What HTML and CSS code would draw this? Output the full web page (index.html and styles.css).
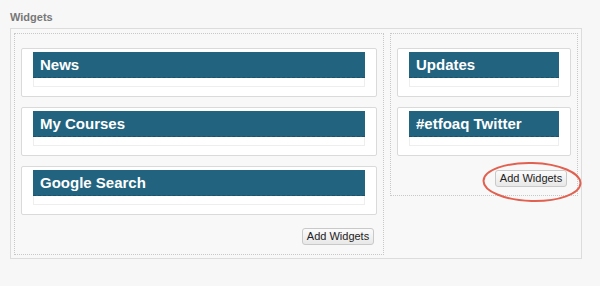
FILE: index.html
```html
<!DOCTYPE html>
<html lang="en">
<head>
    <meta charset="UTF-8">
    <title>Widgets</title>
    <link rel="stylesheet" href="styles.css">
</head>
<body>
    <div class="page">
        <h3 class="section-title">Widgets</h3>
        <div class="widgets-box">
            <!-- Main column -->
            <div class="column column-main">
                <div class="widget">
                    <div class="widget-title">News</div>
                    <div class="widget-body"></div>
                </div>
                <div class="widget">
                    <div class="widget-title">My Courses</div>
                    <div class="widget-body"></div>
                </div>
                <div class="widget">
                    <div class="widget-title">Google Search</div>
                    <div class="widget-body"></div>
                </div>
                <div class="column-actions">
                    <button class="add-btn">Add Widgets</button>
                </div>
            </div>

            <!-- Side column -->
            <div class="column column-side">
                <div class="widget">
                    <div class="widget-title">Updates</div>
                    <div class="widget-body"></div>
                </div>
                <div class="widget">
                    <div class="widget-title">#etfoaq Twitter</div>
                    <div class="widget-body"></div>
                </div>
                <div class="column-actions">
                    <span class="highlight-wrap">
                        <button class="add-btn">Add Widgets</button>
                        <svg class="highlight" width="104" height="46" viewBox="0 0 104 46">
                            <ellipse cx="52" cy="23" rx="48.5" ry="19" fill="none" stroke="#e2604f" stroke-width="2" transform="rotate(1.5 52 23)"/>
                        </svg>
                    </span>
                </div>
            </div>
        </div>
    </div>
</body>
</html>
```

FILE: styles.css
```css
/* Global Styles */
* {
    margin: 0;
    padding: 0;
    box-sizing: border-box;
}

body {
    background-color: #f7f7f7;
    font-family: "Liberation Sans", Arial, sans-serif;
    color: #333;
}

.page {
    padding: 10px 18px 0 10px;
}

.section-title {
    font-size: 11px;
    font-weight: bold;
    line-height: 15px;
    color: #777;
    margin-bottom: 3px;
}

/* Outer box */
.widgets-box {
    display: flex;
    align-items: flex-start;
    gap: 6px;
    border: 1px solid #dcdcdc;
    padding: 4px 3px 3px 3px;
    background: #f8f8f8;
}

.column {
    border: 1px dotted #c8c8c8;
    padding: 14px 6px 8px 6px;
    display: flex;
    flex-direction: column;
    gap: 10px;
}

.column-main {
    width: 370px;
    padding-bottom: 9px;
}

.column-side {
    flex: 1;
}

/* Widget cards */
.widget {
    background: #fff;
    border: 1px solid #dadada;
    border-radius: 2px;
    padding: 3px 11px 9px 11px;
}

.widget-title {
    background: #226480;
    color: #fff;
    font-size: 15px;
    font-weight: bold;
    line-height: 26px;
    height: 26px;
    padding-left: 7px;
    border-bottom: 1px dashed #1b5269;
}

.widget-body {
    height: 9px;
    border: 1px solid #eeeeee;
    border-top: none;
}

/* Add button */
.column-actions {
    display: flex;
    justify-content: flex-end;
    margin-top: 3px;
    padding-right: 3px;
}

.column-side .column-actions {
    margin-top: 4px;
    padding-right: 4px;
}

.add-btn {
    font-family: "Liberation Sans", Arial, sans-serif;
    font-size: 11px;
    color: #222;
    width: 72px;
    height: 17px;
    line-height: 15px;
    background: linear-gradient(#fbfbfb, #e8e8e8);
    border: 1px solid #c9c9c9;
    border-radius: 3px;
}

.highlight-wrap {
    position: relative;
    display: inline-block;
    line-height: 0;
}

.highlight {
    position: absolute;
    left: -15px;
    top: -11px;
    pointer-events: none;
}
```
